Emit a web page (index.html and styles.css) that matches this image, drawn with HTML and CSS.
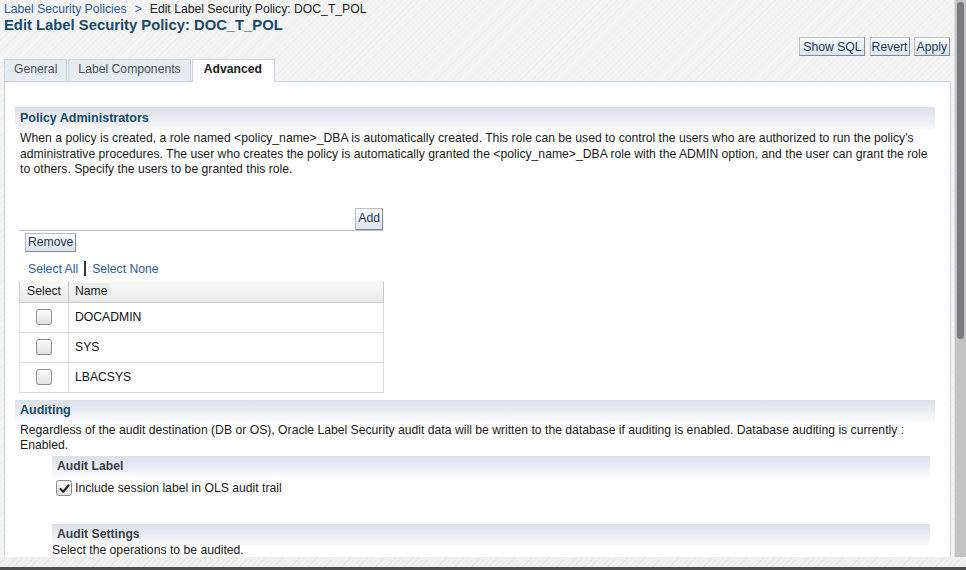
FILE: index.html
```html
<!DOCTYPE html>
<html>
<head>
<meta charset="utf-8">
<link rel="stylesheet" href="styles.css">
</head>
<body>
<div class="frame">
  <div class="viewport">
    <div class="content">
      <div class="crumbs"><a class="link">Label Security Policies</a><span class="sep">&gt;</span><span>Edit Label Security Policy: DOC_T_POL</span></div>
      <h1 class="title">Edit Label Security Policy: DOC_T_POL</h1>
      <div class="actions">
        <button class="btn">Show SQL</button>
        <button class="btn">Revert</button>
        <button class="btn">Apply</button>
      </div>
      <div class="tabs">
        <div class="tab">General</div>
        <div class="tab">Label Components</div>
        <div class="tab active">Advanced</div>
      </div>
      <div class="panel">
        <div class="sec-head">Policy Administrators</div>
        <p class="para">When a policy is created, a role named &lt;policy_name&gt;_DBA is automatically created. This role can be used to control the users who are authorized to run the policy's administrative procedures. The user who creates the policy is automatically granted the &lt;policy_name&gt;_DBA role with the ADMIN option, and the user can grant the role to others. Specify the users to be granted this role.</p>
        <div class="addrow"><button class="btn">Add</button></div>
        <div class="removerow"><button class="btn">Remove</button></div>
        <div class="selects"><a class="link">Select All</a><span class="bar"></span><a class="link">Select None</a></div>
        <table class="grid">
          <thead><tr><th class="c-sel">Select</th><th class="c-name"><span class="name-h">Name</span></th></tr></thead>
          <tbody>
            <tr><td class="c-sel"><span class="cb"></span></td><td>DOCADMIN</td></tr>
            <tr><td class="c-sel"><span class="cb"></span></td><td>SYS</td></tr>
            <tr><td class="c-sel"><span class="cb"></span></td><td>LBACSYS</td></tr>
          </tbody>
        </table>
        <div class="sec-head audit">Auditing</div>
        <p class="para tight">Regardless of the audit destination (DB or OS), Oracle Label Security audit data will be written to the database if auditing is enabled. Database auditing is currently : Enabled.</p>
        <div class="sub">
          <div class="sub-head">Audit Label</div>
          <label class="chk"><span class="cb checked"><svg viewBox="0 0 16 16" width="13" height="13"><path d="M3 8.5 L6.5 12 L13 4" fill="none" stroke="#222" stroke-width="2.6" stroke-linecap="round" stroke-linejoin="round"/></svg></span>Include session label in OLS audit trail</label>
          <div class="sub-head second">Audit Settings</div>
          <p class="sub-text">Select the operations to be audited.</p>
        </div>
      </div>
    </div>
    <div class="vscroll"><div class="thumb"></div></div>
  </div>
  <div class="hbar"></div>
</div>
</body>
</html>
```
FILE: styles.css
```css
html, body {
  margin: 0;
  padding: 0;
  width: 966px;
  height: 570px;
  overflow: hidden;
}
body {
  font-family: "Liberation Sans", Arial, sans-serif;
  font-size: 12.2px;
  color: #1a1a1a;
  background: #f3f3f3;
}
.frame {
  display: flex;
  flex-direction: column;
  height: 570px;
}
.viewport {
  display: flex;
  height: 557px;
  flex: none;
}
.content {
  flex: 1;
  overflow: hidden;
  background-color: #f4f4f4;
  background-image: repeating-linear-gradient(135deg, rgba(0,0,0,0.025) 0 1px, transparent 1px 4px);
}
.vscroll {
  width: 11px;
  flex: none;
  background: #c3c3c3;
  border-left: 1px solid #e2e2e2;
  position: relative;
}
.thumb {
  position: absolute;
  left: 2px;
  top: 2px;
  width: 7px;
  height: 337px;
  border-radius: 4px;
  background: #777b7d;
}
.hbar {
  flex: 1;
  background-color: #f1f1f1;
  background-image: repeating-linear-gradient(135deg, rgba(0,0,0,0.04) 0 1px, transparent 1px 4px);
  border-bottom: 3px solid #4f4f4f;
}
.link {
  color: #2d5c98;
  cursor: pointer;
}
.crumbs {
  padding: 2px 0 0 4px;
  height: 14px;
  line-height: 14px;
  color: #222;
}
.crumbs .sep {
  display: inline-block;
  color: #2d5c98;
  margin: 0 8px 0 8px;
}
.title {
  margin: 0;
  padding-left: 4px;
  font-size: 14.8px;
  line-height: 18px;
  font-weight: bold;
  color: #174a6b;
}
.actions {
  display: flex;
  justify-content: flex-end;
  gap: 4px;
  padding: 3px 4px 0 0;
  height: 19px;
}
.btn {
  font-family: "Liberation Sans", Arial, sans-serif;
  font-size: 12.2px;
  color: #1c3550;
  height: 19px;
  padding: 0 2px;
  border: 1px solid #b3bfcc;
  border-right-color: #7e8b99;
  border-bottom-color: #7e8b99;
  background: linear-gradient(#fbfcfd, #dbe3ed);
  border-radius: 0;
  line-height: 16px;
}
.actions .btn:first-child { margin-right: 1px; padding: 0 2px 0 3px; }
.actions .btn:nth-child(2) { padding: 0 1px; }
.tabs {
  display: flex;
  margin: 3px 0 0 4px;
  height: 22px;
  align-items: flex-end;
}
.tab {
  height: 21px;
  line-height: 19px;
  padding: 0 9px;
  background: #e5ebf1;
  border: 1px solid #c9d6e2;
  border-bottom: none;
  color: #4a4f56;
  margin-right: 1px;
}
.tab:first-child { padding: 0 9px 0 9px; }
.tab.active {
  background: #fff;
  color: #222;
  font-weight: bold;
  height: 22px;
  padding: 0 12px 0 11px;
  margin-bottom: -1px;
  position: relative;
}
.panel {
  margin: 0 3px 0 4px;
  background: #fff;
  border: 1px solid #c5d4e2;
  padding: 25px 15px 0 10px;
  height: 600px;
}
.sec-head {
  height: 23px;
  line-height: 23px;
  padding-left: 5px;
  font-weight: bold;
  font-size: 12.5px;
  color: #174a6b;
  background: linear-gradient(#dadfe9, #f9fafc);
}
.sec-head.audit {
  margin-top: 7px;
  height: 22px;
  line-height: 21px;
}
.para {
  margin: 0;
  padding: 1px 0 0 5px;
  line-height: 15.5px;
}
.para.tight {
  padding-top: 1px;
  line-height: 15px;
}
.addrow {
  width: 364px;
  margin: 30px 0 0 4px;
  display: flex;
  justify-content: flex-end;
  border-bottom: 1px solid #b6c2d0;
}
.addrow .btn {
  height: 22px;
  line-height: 19px;
  padding: 0 2px;
}
.removerow {
  margin: 2px 0 0 10px;
  height: 19px;
}
.selects {
  display: flex;
  align-items: center;
  margin: 9px 0 0 13px;
  height: 16px;
}
.selects .bar {
  display: inline-block;
  width: 2px;
  height: 15px;
  background: #333;
  margin: 0 6px;
}
.grid {
  margin: 4px 0 0 4px;
  width: 365px;
  border-collapse: collapse;
}
.grid th {
  height: 21px;
  font-weight: normal;
  text-align: left;
  background: linear-gradient(#fafafa, #e9e9e9);
  border: 1px solid #c8c8c8;
  border-top: none;
  padding: 0;
  color: #222;
}
.grid th.c-sel {
  width: 48px;
  text-align: center;
  border-left: 1px solid #d0d0d0;
}
.grid .name-h {
  display: inline-block;
  padding: 1px 2px;
  margin-left: 4px;
  background: #ececec;
}
.grid td {
  height: 29px;
  border: 1px solid #dcdcdc;
  padding: 0 0 0 6px;
  color: #111;
}
.grid td.c-sel {
  padding: 0;
  text-align: center;
  border-left-color: #e5e5e5;
}
.cb {
  display: inline-block;
  width: 14px;
  height: 14px;
  border: 1px solid #8d8d8d;
  border-radius: 3px;
  background: linear-gradient(#fdfdfd, #e1e1e1);
  vertical-align: middle;
  margin-top: 0;
}
.sub {
  margin: 3px 5px 0 37px;
}
.sub-head {
  height: 21px;
  line-height: 20px;
  padding-left: 5px;
  font-weight: bold;
  color: #3a3f45;
  background: linear-gradient(#dadfe9, #f9fafc);
}
.sub-head.second {
  margin-top: 27px;
}
.chk {
  display: flex;
  align-items: center;
  gap: 3px;
  margin: 3px 0 0 4px;
  height: 17px;
}
.chk .cb {
  margin: 0;
  width: 14px;
  height: 14px;
  display: flex;
  align-items: center;
  justify-content: center;
}
.sub-text {
  margin: -1px 0 0 0;
  padding-left: 0;
  line-height: 12px;
}
```
